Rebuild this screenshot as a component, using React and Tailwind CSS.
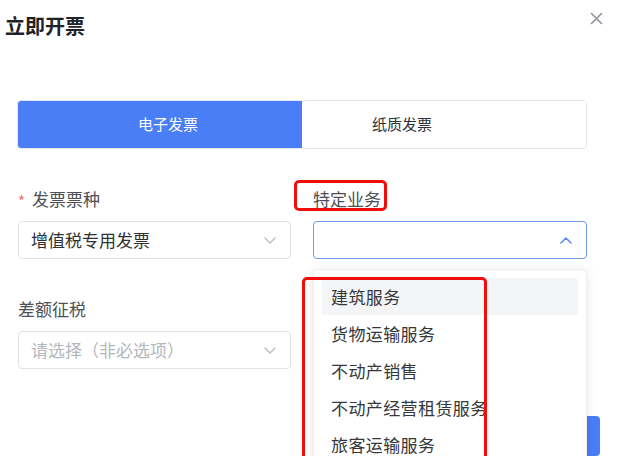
import React from 'react';

const FONT = { fontFamily: '"Noto Sans CJK SC", "Noto Sans", sans-serif' };

// ─── small icons ───
const ChevronDown = ({ className }) => (
  <svg className={className} width="12" height="7" viewBox="0 0 12 7" fill="none">
    <path d="M1 1l5 5 5-5" stroke="currentColor" strokeWidth="1.4" strokeLinecap="round" strokeLinejoin="round" />
  </svg>
);

const ChevronUp = ({ className }) => (
  <svg className={className} width="12" height="7" viewBox="0 0 12 7" fill="none">
    <path d="M1 6l5-5 5 5" stroke="currentColor" strokeWidth="1.6" strokeLinecap="round" strokeLinejoin="round" />
  </svg>
);

const CloseIcon = () => (
  <svg width="13" height="13" viewBox="0 0 13 13" fill="none" className="text-[#8f9399]">
    <path d="M1.5 1.5l10 10M11.5 1.5l-10 10" stroke="currentColor" strokeWidth="1.6" strokeLinecap="round" />
  </svg>
);

const OPTIONS = ['建筑服务', '货物运输服务', '不动产销售', '不动产经营租赁服务', '旅客运输服务'];

const Select = ({ value, placeholder, open }) => (
  <div
    className={`h-[38px] rounded-[4px] border bg-white flex items-center justify-between pl-[12px] pr-[14px] ${
      open ? 'border-[#6c9cf3]' : 'border-[#dfe2e7]'
    }`}
  >
    {value ? (
      <span className="text-[17px] text-[#303133] whitespace-nowrap">{value}</span>
    ) : (
      <span className="text-[17px] text-[#b4b7bd] whitespace-nowrap">{placeholder}</span>
    )}
    {open ? <ChevronUp className="text-[#5b8ef3]" /> : <ChevronDown className="text-[#b9bcc2]" />}
  </div>
);

export default function App() {
  return (
    <div className="relative w-[630px] h-[456px] overflow-hidden bg-white" style={FONT}>
      {/* Header */}
      <header className="flex items-start justify-between pl-[5px] pr-[27px] pt-[14px]">
        <h2 className="text-[20px] leading-[24px] font-bold text-[#1f2329]">立即开票</h2>
        <button className="mt-[-2px]">
          <CloseIcon />
        </button>
      </header>

      {/* Invoice type tabs */}
      <div className="mt-[62px] ml-[17px] w-[570px] h-[49px] flex rounded-[4px] overflow-hidden border border-[#e4e6ea]">
        <div className="w-[284px] bg-[#4a7ef6] flex items-center justify-center pl-[16px] text-[15px] text-white">
          电子发票
        </div>
        <div className="flex-1 bg-white flex items-center justify-center pr-[84px] text-[15px] text-[#303133]">
          纸质发票
        </div>
      </div>

      {/* Form */}
      <div className="mt-[38px] ml-[18px] w-[569px] grid grid-cols-[273px_274px] gap-x-[22px]">
        <div>
          <div className="h-[24px] flex items-center text-[17px] text-[#4d5057]">
            <span className="text-[#f56c6c] text-[15px] mr-[7px] mt-[4px]">*</span>
            发票票种
          </div>
          <div className="mt-[10px]">
            <Select value="增值税专用发票" />
          </div>
        </div>
        <div>
          <div className="h-[24px] flex items-center text-[17px] text-[#4d5057]">特定业务</div>
          <div className="mt-[10px]">
            <Select open />
          </div>
        </div>

        <div className="mt-[38px]">
          <div className="h-[24px] flex items-center text-[17px] text-[#4d5057]">差额征税</div>
          <div className="mt-[10px]">
            <Select placeholder="请选择（非必选项）" />
          </div>
        </div>
        <div />
      </div>

      {/* Footer (covered by the dropdown) */}
      <div className="mt-[47px] flex justify-end pr-[30px]">
        <button className="w-[110px] h-[40px] rounded-[4px] bg-[#4a7ef6] text-white text-[15px]">确定</button>
      </div>

      {/* Dropdown popper */}
      <div className="absolute left-[313px] top-[269px] w-[274px] h-[200px] bg-white border border-[#eceef2] rounded-[4px] shadow-[0_2px_12px_rgba(0,0,0,0.1)] pt-[8px] px-[8px]">
        {OPTIONS.map((o, i) => (
          <div
            key={o}
            className={`h-[37px] flex items-center px-[9px] rounded-[3px] text-[17px] leading-[20px] tracking-[0.4px] text-[#35373b] whitespace-nowrap ${
              i === 0 ? 'bg-[#f4f5f7]' : ''
            }`}
          >
            {o}
          </div>
        ))}
      </div>

      {/* Red annotation boxes */}
      <div className="absolute left-[294px] top-[180px] w-[93px] h-[31px] border-[3px] border-[#f20d0d] rounded-[5px]" />
      <div className="absolute left-[302px] top-[277px] w-[185px] h-[200px] border-[3px] border-[#f20d0d] rounded-[5px]" />
    </div>
  );
}
